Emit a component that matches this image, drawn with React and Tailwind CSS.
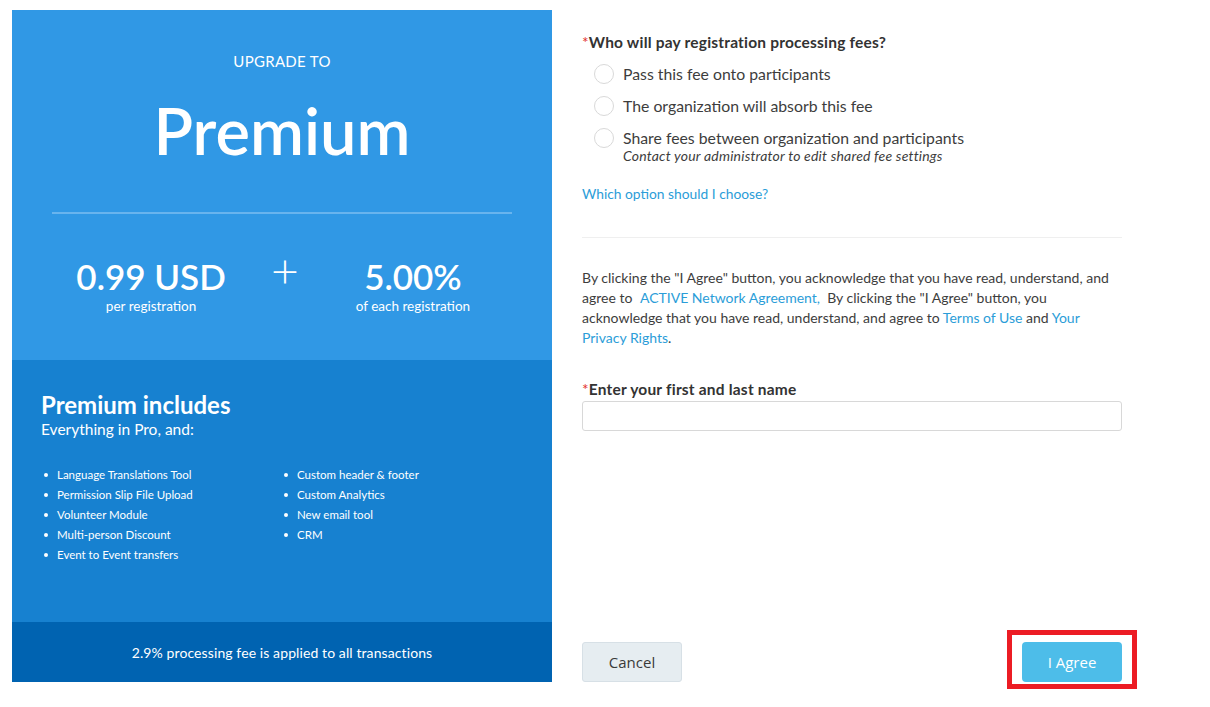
const leftFeatures = [
  "Language Translations Tool",
  "Permission Slip File Upload",
  "Volunteer Module",
  "Multi-person Discount",
  "Event to Event transfers",
];

const rightFeatures = ["Custom header & footer", "Custom Analytics", "New email tool", "CRM"];

const options = [
  { label: "Pass this fee onto participants" },
  { label: "The organization will absorb this fee" },
  {
    label: "Share fees between organization and participants",
    note: "Contact your administrator to edit shared fee settings",
  },
];

function FeatureList({ items }) {
  return (
    <ul className="flex flex-col">
      {items.map((item) => (
        <li key={item} className="flex h-5 items-center text-[11.5px] text-white">
          <span className="mr-[9px] ml-[3px] h-1 w-1 rounded-full bg-white"></span>
          {item}
        </li>
      ))}
    </ul>
  );
}

function Radio({ label, note }) {
  return (
    <div className="flex items-start pl-3">
      <span className="mt-[1px] h-5 w-5 shrink-0 rounded-full border border-[#d9d9d9] bg-white"></span>
      <div className="ml-[9px]">
        <div className="text-[15.8px] leading-[22px] text-[#3d3d3d]">{label}</div>
        {note && (
          <div className="-mt-[1px] text-[14px] italic leading-4 tracking-[0.2px] text-[#3d3d3d]">{note}</div>
        )}
      </div>
    </div>
  );
}

export default function App() {
  return (
    <div className="flex min-h-[707px] bg-white pt-[10px] pl-3 font-['Lato','Open_Sans',sans-serif]">
      {/* plan panel */}
      <div className="flex h-[672px] w-[540px] shrink-0 flex-col text-white">
        <div className="flex h-[350px] flex-col items-center bg-[#3098e5] px-10">
          <div className="mt-[42px] text-[15px] leading-[18px] tracking-[0.3px]">UPGRADE TO</div>
          <div className="mt-[22px] text-[65px] font-semibold leading-[76px]">Premium</div>
          <div className="mt-[44px] h-[2px] w-[460px] bg-[#68b4ee]"></div>
          <div className="mt-[42px] flex items-start pr-[18px]">
            <div className="flex w-[156px] flex-col items-center whitespace-nowrap">
              <div className="text-[35px] font-semibold leading-[40px]">0.99 USD</div>
              <div className="mt-[2px] text-[13.5px] leading-4">per registration</div>
            </div>
            <div className="ml-[42px] -mt-[8px] text-[48px] font-light leading-[44px]">+</div>
            <div className="ml-[54px] flex w-[120px] flex-col items-center whitespace-nowrap">
              <div className="text-[35px] font-semibold leading-[40px]">5.00%</div>
              <div className="mt-[2px] text-[13.5px] leading-4">of each registration</div>
            </div>
          </div>
        </div>
        <div className="flex flex-1 flex-col bg-[#1781d0] pl-[29px] pt-[31px]">
          <div className="text-[24px] font-bold leading-[28px]">Premium includes</div>
          <div className="text-[15.5px] leading-5">Everything in Pro, and:</div>
          <div className="mt-[26px] grid grid-cols-[240px_1fr]">
            <FeatureList items={leftFeatures} />
            <FeatureList items={rightFeatures} />
          </div>
        </div>
        <div className="flex h-[60px] items-center justify-center bg-[#0063b1] text-[14px] tracking-[0.1px]">
          2.9% processing fee is applied to all transactions
        </div>
      </div>

      {/* agreement form */}
      <div className="ml-[30px] flex h-[672px] w-[540px] flex-col">
        <div className="mt-[22px] text-[15.5px] font-bold leading-5 tracking-[0.2px] text-[#333]">
          <span className="font-normal text-[#e3342f]">*</span>Who will pay registration processing fees?
        </div>
        <div className="mt-[11px] flex flex-col gap-[10px]">
          {options.map((o) => (
            <Radio key={o.label} {...o} />
          ))}
        </div>
        <a className="mt-[21px] text-[13.8px] leading-[18px] text-[#2b9dd8]">Which option should I choose?</a>
        <div className="mt-[34px] h-px w-full bg-[#efefef]"></div>
        <p className="mt-[30px] text-[14px] leading-5 text-[#3d3d3d]">
          By clicking the "I Agree" button, you acknowledge that you have read, understand, and agree to{" "}
          <a className="ml-1 text-[#2b9dd8]">ACTIVE Network Agreement,</a>&nbsp; By clicking the "I Agree" button,
          you acknowledge that you have read, understand, and agree to <a className="text-[#2b9dd8]">Terms of Use</a>{" "}
          and <a className="text-[#2b9dd8]">Your Privacy Rights</a>.
        </p>
        <div className="mt-[31px] text-[15.5px] font-bold leading-5 tracking-[0.2px] text-[#333]">
          <span className="font-normal text-[#e3342f]">*</span>Enter your first and last name
        </div>
        <input
          type="text"
          className="mt-[2px] h-[30px] w-full rounded-[3px] border border-[#d8d8d8] bg-white px-2 outline-none"
        />
        <div className="mt-auto flex items-end justify-between">
          <button className="h-10 w-[100px] rounded-[3px] border border-[#d7e0e6] bg-[#e6edf1] font-['Open_Sans',sans-serif] text-[15px] text-[#3a3a3a]">
            Cancel
          </button>
          <div className="-mr-[15px] -mb-[7px] border-[5px] border-[#ec1c24] px-[10px] pt-[7px] pb-[2px]">
            <button className="block h-10 w-[100px] rounded-[4px] bg-[#4dbde9] font-['Open_Sans',sans-serif] text-[15px] text-white">
              I Agree
            </button>
          </div>
        </div>
      </div>
    </div>
  );
}
